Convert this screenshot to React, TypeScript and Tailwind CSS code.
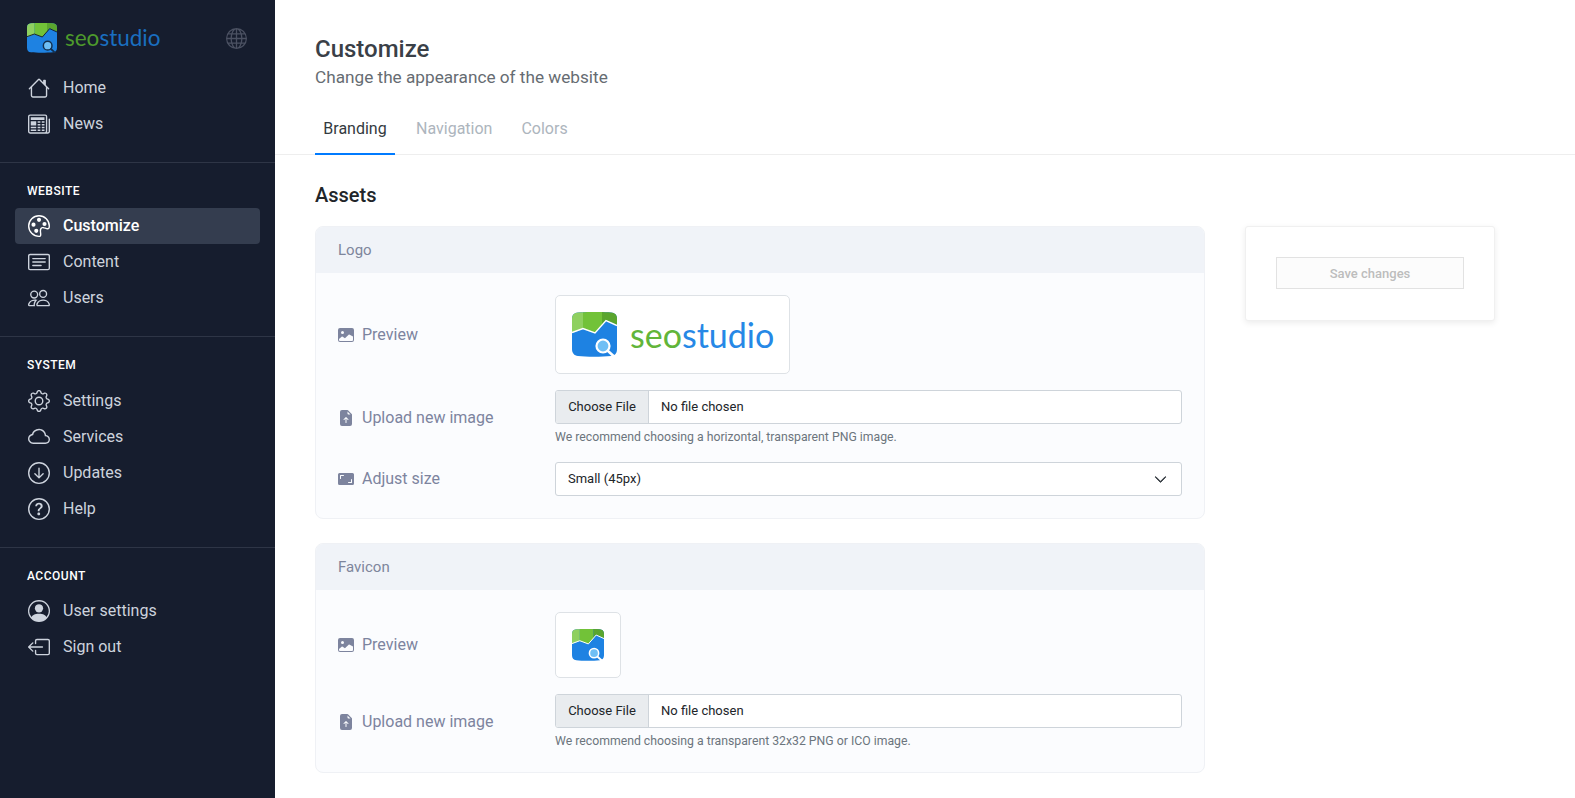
import React from "react";
import { BsHouse, BsNewspaper, BsPalette, BsCardText, BsPeople, BsGear, BsCloud, BsArrowDownCircle, BsQuestionCircle, BsPersonCircle, BsBoxArrowLeft, BsGlobe, BsImageFill, BsFileEarmarkArrowUpFill, BsAspectRatioFill, BsChevronDown } from "react-icons/bs";

function LogoMark({ size, dim = false }: { size: number; dim?: boolean }) {
  const id = dim ? "lgd" : size > 40 ? "lgn" : "lgs";
  const line = dim ? "#161d2e" : "#ffffff";
  return (
    <svg width={size} height={size} viewBox="0 0 45 45" className="shrink-0">
      <defs>
        <clipPath id={id}>
          <path d="M6 0.5 C16 -0.2 30 -0.2 39 0.5 C43 0.8 45 3 45 7 L45 37 C45 41.5 43 43.6 39 44 C30 45 14 45 6 44 C2 43.6 0 41 0 37 L0 7 C0 3 2 0.8 6 0.5 Z" />
        </clipPath>
      </defs>
      <g clipPath={`url(#${id})`}>
        <rect width="45" height="45" fill="#1e82e2" />
        <path d="M0 0 H11 V17 L0 21 Z" fill="#8fd060" />
        <path d="M11 0 H30 V13 L23 21 L11 17 Z" fill="#72c238" />
        <path d="M30 0 H45 V13 L34 8 L30 13 Z" fill="#5aa52e" />
        <polyline points="0,20.5 11,16.5 23,21 34,8.5 45,13.5" fill="none" stroke={line} strokeWidth="1.4" />
      </g>
      <circle cx="31" cy="34" r="6.5" fill="#6fbff5" stroke={dim ? "#14304f" : "#ffffff"} strokeWidth="2.2" />
      <path d="M36 39 L41.5 44" stroke={dim ? "#14304f" : "#ffffff"} strokeWidth="2.6" strokeLinecap="round" />
    </svg>
  );
}

function NavItem({ icon: Icon, label, active = false }: { icon: React.ComponentType<{ size?: number; className?: string }>; label: string; active?: boolean }) {
  return (
    <div className={`mx-[15px] flex h-9 items-center gap-[13px] rounded-[4px] px-[13px] text-base ${active ? "bg-[#343d4f] font-medium text-white" : "text-[#cdd3dd]"}`}>
      <Icon size={22} className="shrink-0" />
      <span>{label}</span>
    </div>
  );
}

function SectionLabel({ children, tight = false }: { children: React.ReactNode; tight?: boolean }) {
  return <div className={`${tight ? "mb-[9px]" : "mb-[10px]"} px-[27px] text-xs leading-4 font-medium tracking-[0.5px] text-white`}>{children}</div>;
}

function RowLabel({ icon: Icon, children }: { icon: React.ComponentType<{ size?: number; className?: string }>; children: React.ReactNode }) {
  return (
    <div className="flex w-[217px] shrink-0 items-center gap-2 text-base text-[#7d849e]">
      <Icon size={16} className="shrink-0 text-[#7d849e]" />
      <span>{children}</span>
    </div>
  );
}

function FileField({ hint }: { hint: string }) {
  return (
    <div className="flex-1">
      <div className="flex h-[34px] overflow-hidden rounded-[3px] border border-[#ced4da] bg-white text-[13px] leading-5 text-[#212529]">
        <div className="flex w-[93px] items-center justify-center border-r border-[#ced4da] bg-[#e9ecef]">Choose File</div>
        <div className="flex items-center pl-[12px]">No file chosen</div>
      </div>
      <div className="mt-[4px] text-[12.25px] leading-[18px] text-[#6c757d]">{hint}</div>
    </div>
  );
}

function Card({ title, children }: { title: string; children: React.ReactNode }) {
  return (
    <section className="overflow-hidden rounded-[8px] border border-[#eff1f5] bg-[#fbfcfe]">
      <div className="flex h-[46px] items-center bg-[#f0f3f8] px-[22px] text-[15px] text-[#7e869c]">{title}</div>
      <div className="flex flex-col gap-4 px-[22px] pt-[22px] pb-[22px]">{children}</div>
    </section>
  );
}

export default function App() {
  return (
    <div className="flex h-screen overflow-hidden bg-white font-['Roboto',sans-serif]">
      <aside className="h-screen w-[275px] shrink-0 bg-[#161d2e]">
        <div className="flex h-[70px] items-start justify-between pt-[23px] pr-[28px] pl-[27px]">
          <div className="flex items-center gap-[8px]">
            <LogoMark size={30} dim />
            <span className="font-['Lato',sans-serif] text-[22.5px] leading-[30px]">
              <span className="text-[#4d9a2c]">seo</span>
              <span className="text-[#1a6fc0]">studio</span>
            </span>
          </div>
          <BsGlobe size={21} className="mt-[5px] text-[#4b5162]" />
        </div>
        <div className="border-b border-[#2e3546] pb-5">
          <NavItem icon={BsHouse} label="Home" />
          <NavItem icon={BsNewspaper} label="News" />
        </div>
        <div className="border-b border-[#2e3546] pt-5 pb-5">
          <SectionLabel tight>WEBSITE</SectionLabel>
          <NavItem icon={BsPalette} label="Customize" active />
          <NavItem icon={BsCardText} label="Content" />
          <NavItem icon={BsPeople} label="Users" />
        </div>
        <div className="border-b border-[#2e3546] pt-5 pb-5">
          <SectionLabel>SYSTEM</SectionLabel>
          <NavItem icon={BsGear} label="Settings" />
          <NavItem icon={BsCloud} label="Services" />
          <NavItem icon={BsArrowDownCircle} label="Updates" />
          <NavItem icon={BsQuestionCircle} label="Help" />
        </div>
        <div className="pt-5">
          <SectionLabel tight>ACCOUNT</SectionLabel>
          <NavItem icon={BsPersonCircle} label="User settings" />
          <NavItem icon={BsBoxArrowLeft} label="Sign out" />
        </div>
      </aside>

      <main className="min-w-0 flex-1">
        <header className="border-b border-[#eeeeee] pt-[33px] pl-10">
          <h1 className="text-2xl leading-8 font-medium text-[#3a4047]">Customize</h1>
          <p className="text-[17.2px] leading-6 text-[#666c72]">Change the appearance of the website</p>
          <nav className="mt-[24px] -mb-px flex gap-[13px] text-base leading-6">
            <div className="w-[80px] border-b-2 border-[#007bff] pt-[4px] pb-[12px] text-center text-[#343a40]">Branding</div>
            <div className="px-2 pt-[4px] pb-[14px] text-[#adb5bd]">Navigation</div>
            <div className="px-2 pt-[4px] pb-[14px] text-[#adb5bd]">Colors</div>
          </nav>
        </header>
        <div className="pr-20 pl-10">
          <h2 className="mt-[26px] text-xl leading-7 font-medium text-[#212529]">Assets</h2>
          <div className="mt-[17px] flex items-start gap-10">
            <div className="flex flex-1 flex-col gap-6">
              <Card title="Logo">
                <div className="flex items-center">
                  <RowLabel icon={BsImageFill}>Preview</RowLabel>
                  <div className="flex h-[79px] w-[235px] items-center gap-[13px] rounded-[5px] border border-[#dee2e6] bg-white pl-[16px]">
                    <LogoMark size={45} />
                    <span className="font-['Lato',sans-serif] text-[34px] leading-none">
                      <span className="text-[#62b53a]">seo</span>
                      <span className="text-[#2688e6]">studio</span>
                    </span>
                  </div>
                </div>
                <div className="flex items-center">
                  <RowLabel icon={BsFileEarmarkArrowUpFill}>Upload new image</RowLabel>
                  <FileField hint="We recommend choosing a horizontal, transparent PNG image." />
                </div>
                <div className="flex items-center">
                  <RowLabel icon={BsAspectRatioFill}>Adjust size</RowLabel>
                  <div className="flex h-[34px] flex-1 items-center justify-between rounded-[3px] border border-[#ced4da] bg-white pr-[14px] pl-[12px] text-[13px] text-[#212529]">
                    <span>Small (45px)</span>
                    <BsChevronDown size={13} strokeWidth={1} className="text-[#343a40]" />
                  </div>
                </div>
              </Card>
              <Card title="Favicon">
                <div className="flex items-center">
                  <RowLabel icon={BsImageFill}>Preview</RowLabel>
                  <div className="flex h-[66px] w-[66px] items-center justify-center rounded-[5px] border border-[#dee2e6] bg-white">
                    <LogoMark size={32} />
                  </div>
                </div>
                <div className="flex items-center">
                  <RowLabel icon={BsFileEarmarkArrowUpFill}>Upload new image</RowLabel>
                  <FileField hint="We recommend choosing a transparent 32x32 PNG or ICO image." />
                </div>
              </Card>
            </div>
            <aside className="w-[250px] shrink-0 rounded-[3px] border border-[#f0f0f0] bg-white px-[30px] pt-[30px] pb-[31px] shadow-[0_2px_6px_rgba(0,0,0,0.08)]">
              <div className="flex h-8 items-center justify-center border border-[#e2e2e2] bg-[#fcfcfc] pt-px text-[13px] font-medium text-[#bdbdbd]">Save changes</div>
            </aside>
          </div>
        </div>
      </main>
    </div>
  );
}
